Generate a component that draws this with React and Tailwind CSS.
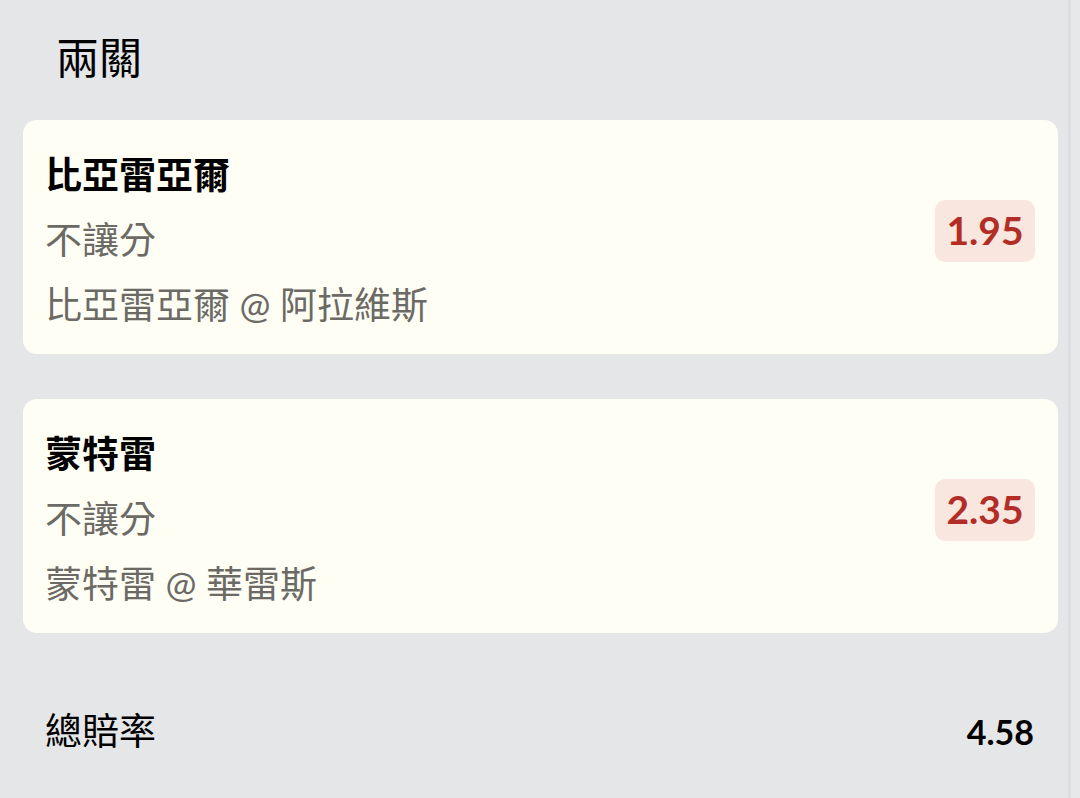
import React from 'react';

const legs = [
  { team: '比亞雷亞爾', market: '不讓分', match: '比亞雷亞爾 @ 阿拉維斯', odds: '1.95' },
  { team: '蒙特雷', market: '不讓分', match: '蒙特雷 @ 華雷斯', odds: '2.35' },
];

const font = "font-['Lato','Noto_Sans_CJK_TC',sans-serif]";

const LegCard = ({ leg }) => (
  <div className="flex items-center justify-between bg-[#fffef5] rounded-[14px] pl-[22px] pr-[23px] pt-[22px] pb-[17px]">
    <div className="flex flex-col">
      <div className="text-[37px] leading-[65px] font-bold text-black">{leg.team}</div>
      <div className="text-[37px] leading-[65px] text-[#6b6a65]">{leg.market}</div>
      <div className="text-[37px] leading-[65px] text-[#6b6a65]">{leg.match}</div>
    </div>
    <div className="mb-[18px] h-[62px] w-[100px] flex items-center justify-center rounded-[10px] bg-[#f8e6df] text-[39px] font-bold text-[#b22d26]">
      {leg.odds}
    </div>
  </div>
);

export default function App() {
  return (
    <div className={`${font} w-[1080px] h-[798px] bg-[#e5e6e8] flex overflow-hidden`}>
      <div className="flex-1 flex flex-col">
        <div className="pl-[56px] pt-[29px] h-[120px] text-[43px] leading-[58px] text-black">兩關</div>
        <div className="flex flex-col gap-[45px] pl-[23px] pr-[10px]">
          {legs.map((leg) => (
            <LegCard key={leg.team} leg={leg} />
          ))}
        </div>
        <div className="flex items-center justify-between pl-[45px] pr-[34px] mt-[66px] h-[64px]">
          <span className="text-[37px] text-black">總賠率</span>
          <span className="text-[34px] font-bold text-black">4.58</span>
        </div>
      </div>
      <div className="w-[3px] bg-[#dcdde0]"></div>
      <div className="w-[9px] bg-[#e7e8ea]"></div>
    </div>
  );
}
